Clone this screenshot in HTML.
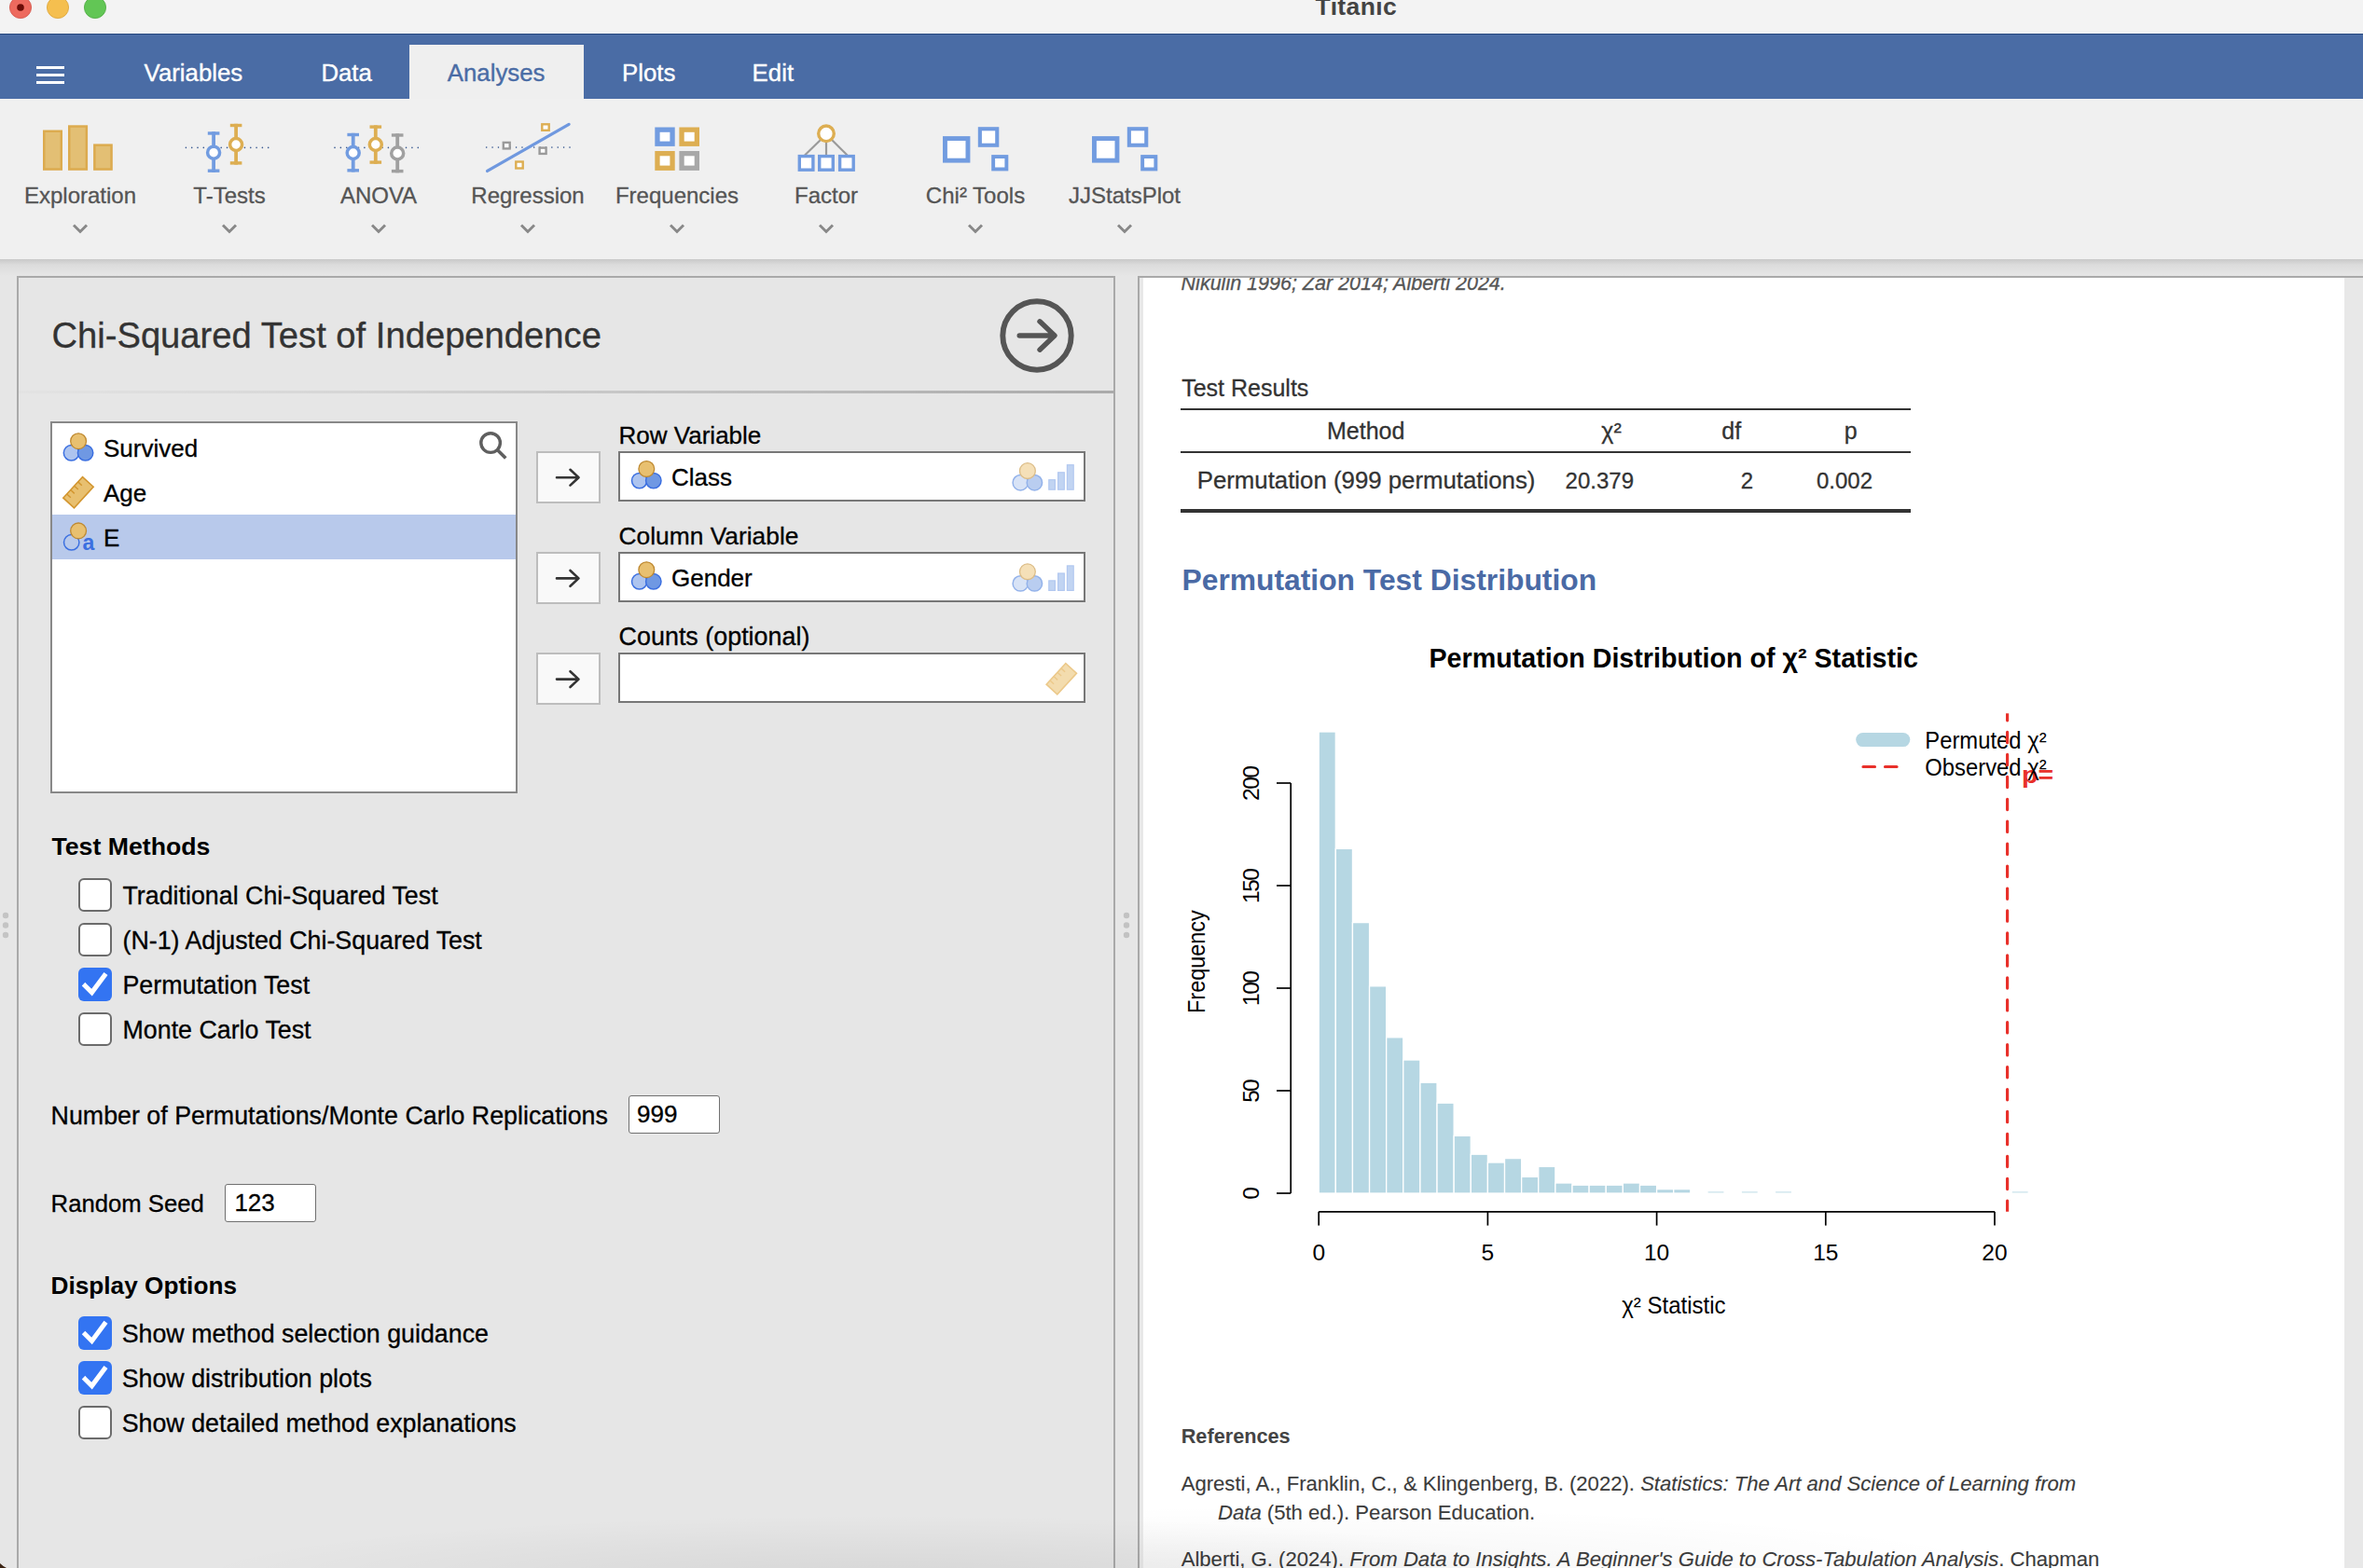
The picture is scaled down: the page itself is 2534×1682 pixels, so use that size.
<!DOCTYPE html>
<html><head><meta charset="utf-8"><title>Titanic</title>
<style>
html,body{margin:0;padding:0;width:2534px;height:1682px;overflow:hidden;background:#e6e6e6;font-family:"Liberation Sans", sans-serif;}
.t{position:absolute;white-space:nowrap;line-height:1;}
svg{overflow:visible}
</style></head><body>
<div style="position:absolute;left:0px;top:0px;width:2534px;height:36px;background:#f3f3f3"></div>
<div style="position:absolute;left:0px;top:35px;width:2534px;height:1px;background:#ffffff"></div>
<svg style="position:absolute;left:0px;top:0px;" width="130" height="36" viewBox="0 0 130 36"><circle cx="22" cy="8" r="11.6" fill="#ed6a5e" stroke="#d2574c" stroke-width="0.8"/><circle cx="22" cy="8" r="3.8" fill="#6a0c06"/><circle cx="62" cy="8" r="11.6" fill="#f5bf4f" stroke="#d9a33a" stroke-width="0.8"/><circle cx="102" cy="8" r="11.6" fill="#62c655" stroke="#4ea942" stroke-width="0.8"/></svg>
<div class="t" style="left:1410.6px;top:-5.8px;font-size:26.5px;color:#444;font-weight:bold;font-style:normal;letter-spacing:0.35px;">Titanic</div>
<svg style="position:absolute;left:0px;top:1660px;" width="30" height="22" viewBox="0 0 30 22"><path d="M0 17 Q3 20 7 22 L0 22 Z" fill="#3b2414"/></svg>
<div style="position:absolute;left:0px;top:36px;width:2534px;height:70px;background:#4a6ca5"></div>
<div style="position:absolute;left:0px;top:36px;width:2534px;height:1px;background:#25467c"></div>
<div style="position:absolute;left:39px;top:70.5px;width:30px;height:3.0px;background:#fff"></div>
<div style="position:absolute;left:39px;top:78.5px;width:30px;height:3.0px;background:#fff"></div>
<div style="position:absolute;left:39px;top:86.5px;width:30px;height:3.0px;background:#fff"></div>
<div style="position:absolute;left:439px;top:48px;width:187px;height:58px;background:#efefef"></div>
<div class="t" style="left:154.6px;top:66.2px;font-size:25.8px;color:#fff;font-weight:normal;font-style:normal;-webkit-text-stroke:0.35px #fff">Variables</div>
<div class="t" style="left:344.4px;top:66.2px;font-size:25.8px;color:#fff;font-weight:normal;font-style:normal;-webkit-text-stroke:0.35px #fff">Data</div>
<div class="t" style="left:479.8px;top:66.2px;font-size:25.8px;color:#4a6ca5;font-weight:normal;font-style:normal;-webkit-text-stroke:0.35px #4a6ca5">Analyses</div>
<div class="t" style="left:667.0px;top:66.2px;font-size:25.8px;color:#fff;font-weight:normal;font-style:normal;-webkit-text-stroke:0.35px #fff">Plots</div>
<div class="t" style="left:806.6px;top:66.2px;font-size:25.8px;color:#fff;font-weight:normal;font-style:normal;-webkit-text-stroke:0.35px #fff">Edit</div>
<div style="position:absolute;left:0px;top:106px;width:2534px;height:172px;background:#f0f0f0"></div>
<div style="position:absolute;left:0px;top:278px;width:2534px;height:18px;background:linear-gradient(#c9c9c9,#dcdcdc 35%,#e6e6e6)"></div>
<div class="t" style="left:86.0px;transform:translateX(-50%);top:198.1px;font-size:24px;color:#555;font-weight:normal;font-style:normal;-webkit-text-stroke-width:0.3px;">Exploration</div>
<svg style="position:absolute;left:78px;top:240px;" width="16" height="10" viewBox="0 0 16 10"><polyline points="1,1.5 8,8.5 15,1.5" fill="none" stroke="#888" stroke-width="2.9"/></svg>
<div class="t" style="left:246.0px;transform:translateX(-50%);top:198.1px;font-size:24px;color:#555;font-weight:normal;font-style:normal;-webkit-text-stroke-width:0.3px;">T-Tests</div>
<svg style="position:absolute;left:238px;top:240px;" width="16" height="10" viewBox="0 0 16 10"><polyline points="1,1.5 8,8.5 15,1.5" fill="none" stroke="#888" stroke-width="2.9"/></svg>
<div class="t" style="left:406.0px;transform:translateX(-50%);top:198.1px;font-size:24px;color:#555;font-weight:normal;font-style:normal;-webkit-text-stroke-width:0.3px;">ANOVA</div>
<svg style="position:absolute;left:398px;top:240px;" width="16" height="10" viewBox="0 0 16 10"><polyline points="1,1.5 8,8.5 15,1.5" fill="none" stroke="#888" stroke-width="2.9"/></svg>
<div class="t" style="left:566.0px;transform:translateX(-50%);top:198.1px;font-size:24px;color:#555;font-weight:normal;font-style:normal;-webkit-text-stroke-width:0.3px;">Regression</div>
<svg style="position:absolute;left:558px;top:240px;" width="16" height="10" viewBox="0 0 16 10"><polyline points="1,1.5 8,8.5 15,1.5" fill="none" stroke="#888" stroke-width="2.9"/></svg>
<div class="t" style="left:726.0px;transform:translateX(-50%);top:198.1px;font-size:24px;color:#555;font-weight:normal;font-style:normal;-webkit-text-stroke-width:0.3px;">Frequencies</div>
<svg style="position:absolute;left:718px;top:240px;" width="16" height="10" viewBox="0 0 16 10"><polyline points="1,1.5 8,8.5 15,1.5" fill="none" stroke="#888" stroke-width="2.9"/></svg>
<div class="t" style="left:886.0px;transform:translateX(-50%);top:198.1px;font-size:24px;color:#555;font-weight:normal;font-style:normal;-webkit-text-stroke-width:0.3px;">Factor</div>
<svg style="position:absolute;left:878px;top:240px;" width="16" height="10" viewBox="0 0 16 10"><polyline points="1,1.5 8,8.5 15,1.5" fill="none" stroke="#888" stroke-width="2.9"/></svg>
<div class="t" style="left:1046.0px;transform:translateX(-50%);top:198.1px;font-size:24px;color:#555;font-weight:normal;font-style:normal;-webkit-text-stroke-width:0.3px;">Chi² Tools</div>
<svg style="position:absolute;left:1038px;top:240px;" width="16" height="10" viewBox="0 0 16 10"><polyline points="1,1.5 8,8.5 15,1.5" fill="none" stroke="#888" stroke-width="2.9"/></svg>
<div class="t" style="left:1206.0px;transform:translateX(-50%);top:198.1px;font-size:24px;color:#555;font-weight:normal;font-style:normal;-webkit-text-stroke-width:0.3px;">JJStatsPlot</div>
<svg style="position:absolute;left:1198px;top:240px;" width="16" height="10" viewBox="0 0 16 10"><polyline points="1,1.5 8,8.5 15,1.5" fill="none" stroke="#888" stroke-width="2.9"/></svg>
<svg style="position:absolute;left:0px;top:0px;pointer-events:none" width="2534" height="300" viewBox="0 0 2534 300"><rect x="47.25" y="140.75" width="18.5" height="40.80000000000001" fill="#e3bf74" stroke="#dcab4f" stroke-width="2.5"/><rect x="74.25" y="135.55" width="18.599999999999994" height="46.0" fill="#e3bf74" stroke="#dcab4f" stroke-width="2.5"/><rect x="101.35" y="155.65" width="18.200000000000003" height="25.900000000000006" fill="#e3bf74" stroke="#dcab4f" stroke-width="2.5"/></svg>
<svg style="position:absolute;left:0px;top:0px;pointer-events:none" width="2534" height="300" viewBox="0 0 2534 300"><circle cx="199.40" cy="158.4" r="0.8" fill="#3a5a92"/><circle cx="205.71" cy="158.4" r="0.8" fill="#3a5a92"/><circle cx="212.01" cy="158.4" r="0.8" fill="#3a5a92"/><circle cx="218.32" cy="158.4" r="0.8" fill="#3a5a92"/><circle cx="224.63" cy="158.4" r="0.8" fill="#3a5a92"/><circle cx="230.94" cy="158.4" r="0.8" fill="#3a5a92"/><circle cx="237.24" cy="158.4" r="0.8" fill="#3a5a92"/><circle cx="243.55" cy="158.4" r="0.8" fill="#3a5a92"/><circle cx="249.86" cy="158.4" r="0.8" fill="#3a5a92"/><circle cx="256.16" cy="158.4" r="0.8" fill="#3a5a92"/><circle cx="262.47" cy="158.4" r="0.8" fill="#3a5a92"/><circle cx="268.78" cy="158.4" r="0.8" fill="#3a5a92"/><circle cx="275.09" cy="158.4" r="0.8" fill="#3a5a92"/><circle cx="281.39" cy="158.4" r="0.8" fill="#3a5a92"/><circle cx="287.70" cy="158.4" r="0.8" fill="#3a5a92"/><line x1="229.1" y1="141.3" x2="229.1" y2="184.9" stroke="#729ce0" stroke-width="3.8"/><rect x="222.79999999999998" y="141.3" width="12.6" height="3.4" fill="#729ce0"/><rect x="222.79999999999998" y="181.5" width="12.6" height="3.4" fill="#729ce0"/><circle cx="229.1" cy="163.7" r="6.5" fill="#fff" stroke="#729ce0" stroke-width="3.5"/><line x1="253.1" y1="132.8" x2="253.1" y2="176.6" stroke="#ddae52" stroke-width="3.8"/><rect x="246.79999999999998" y="132.8" width="12.6" height="3.4" fill="#ddae52"/><rect x="246.79999999999998" y="173.2" width="12.6" height="3.4" fill="#ddae52"/><circle cx="253.1" cy="155" r="6.5" fill="#fff" stroke="#ddae52" stroke-width="3.5"/><circle cx="359.00" cy="158.4" r="0.8" fill="#3a5a92"/><circle cx="365.38" cy="158.4" r="0.8" fill="#3a5a92"/><circle cx="371.76" cy="158.4" r="0.8" fill="#3a5a92"/><circle cx="378.14" cy="158.4" r="0.8" fill="#3a5a92"/><circle cx="384.51" cy="158.4" r="0.8" fill="#3a5a92"/><circle cx="390.89" cy="158.4" r="0.8" fill="#3a5a92"/><circle cx="397.27" cy="158.4" r="0.8" fill="#3a5a92"/><circle cx="403.65" cy="158.4" r="0.8" fill="#3a5a92"/><circle cx="410.03" cy="158.4" r="0.8" fill="#3a5a92"/><circle cx="416.41" cy="158.4" r="0.8" fill="#3a5a92"/><circle cx="422.79" cy="158.4" r="0.8" fill="#3a5a92"/><circle cx="429.16" cy="158.4" r="0.8" fill="#3a5a92"/><circle cx="435.54" cy="158.4" r="0.8" fill="#3a5a92"/><circle cx="441.92" cy="158.4" r="0.8" fill="#3a5a92"/><circle cx="448.30" cy="158.4" r="0.8" fill="#3a5a92"/><line x1="378.7" y1="142.8" x2="378.7" y2="184.5" stroke="#729ce0" stroke-width="3.8"/><rect x="372.4" y="142.8" width="12.6" height="3.4" fill="#729ce0"/><rect x="372.4" y="181.1" width="12.6" height="3.4" fill="#729ce0"/><circle cx="378.7" cy="164" r="6.5" fill="#fff" stroke="#729ce0" stroke-width="3.5"/><line x1="402.8" y1="134.4" x2="402.8" y2="175.8" stroke="#ddae52" stroke-width="3.8"/><rect x="396.5" y="134.4" width="12.6" height="3.4" fill="#ddae52"/><rect x="396.5" y="172.4" width="12.6" height="3.4" fill="#ddae52"/><circle cx="402.8" cy="155" r="6.5" fill="#fff" stroke="#ddae52" stroke-width="3.5"/><line x1="426.2" y1="143.3" x2="426.2" y2="185.3" stroke="#a0a0a0" stroke-width="3.8"/><rect x="419.9" y="143.3" width="12.6" height="3.4" fill="#a0a0a0"/><rect x="419.9" y="181.9" width="12.6" height="3.4" fill="#a0a0a0"/><circle cx="426.2" cy="164.5" r="6.5" fill="#fff" stroke="#a0a0a0" stroke-width="3.5"/><circle cx="521.70" cy="158.1" r="0.8" fill="#3a5a92"/><circle cx="528.08" cy="158.1" r="0.8" fill="#3a5a92"/><circle cx="534.46" cy="158.1" r="0.8" fill="#3a5a92"/><circle cx="540.84" cy="158.1" r="0.8" fill="#3a5a92"/><circle cx="547.21" cy="158.1" r="0.8" fill="#3a5a92"/><circle cx="553.59" cy="158.1" r="0.8" fill="#3a5a92"/><circle cx="559.97" cy="158.1" r="0.8" fill="#3a5a92"/><circle cx="566.35" cy="158.1" r="0.8" fill="#3a5a92"/><circle cx="572.73" cy="158.1" r="0.8" fill="#3a5a92"/><circle cx="579.11" cy="158.1" r="0.8" fill="#3a5a92"/><circle cx="585.49" cy="158.1" r="0.8" fill="#3a5a92"/><circle cx="591.86" cy="158.1" r="0.8" fill="#3a5a92"/><circle cx="598.24" cy="158.1" r="0.8" fill="#3a5a92"/><circle cx="604.62" cy="158.1" r="0.8" fill="#3a5a92"/><circle cx="611.00" cy="158.1" r="0.8" fill="#3a5a92"/><rect x="539.80" y="152.90" width="6.90" height="6.50" fill="#fff" stroke="#9a9a9a" stroke-width="2.4"/><rect x="578.60" y="158.60" width="7.00" height="6.30" fill="#fff" stroke="#9a9a9a" stroke-width="2.4"/><line x1="522.6" y1="183.4" x2="610.1" y2="133.4" stroke="#6f98df" stroke-width="3.3" stroke-linecap="round"/><rect x="581.30" y="133.30" width="7.40" height="6.50" fill="#fff" stroke="#ddae52" stroke-width="2.4"/><rect x="553.30" y="173.50" width="7.40" height="7.00" fill="#fff" stroke="#ddae52" stroke-width="2.4"/><rect x="704.95" y="139.15" width="16.10" height="15.10" fill="#fff" stroke="#729ce0" stroke-width="5.3"/><rect x="731.05" y="139.15" width="16.30" height="15.10" fill="#fff" stroke="#ddae52" stroke-width="5.3"/><rect x="704.95" y="164.65" width="16.10" height="15.60" fill="#fff" stroke="#ddae52" stroke-width="5.3"/><rect x="731.05" y="164.65" width="16.30" height="15.60" fill="#fff" stroke="#a8a8a8" stroke-width="5.3"/><g stroke="#9a9a9a" stroke-width="2.2"><line x1="880" y1="150" x2="863" y2="166.5"/><line x1="886" y1="152" x2="886" y2="166.5"/><line x1="892" y1="150" x2="908.6" y2="166.5"/></g><circle cx="886" cy="143.3" r="8.3" fill="#fff" stroke="#ddae52" stroke-width="3.4"/><rect x="857.30" y="167.60" width="14.60" height="14.60" fill="#fff" stroke="#729ce0" stroke-width="3.4"/><rect x="878.70" y="167.60" width="14.60" height="14.60" fill="#fff" stroke="#729ce0" stroke-width="3.4"/><rect x="900.60" y="167.60" width="14.60" height="14.60" fill="#fff" stroke="#729ce0" stroke-width="3.4"/><rect x="1013.45" y="148.55" width="24.50" height="23.60" fill="#fff" stroke="#729ce0" stroke-width="4.9"/><rect x="1050.85" y="138.25" width="18.40" height="17.50" fill="#fff" stroke="#729ce0" stroke-width="4.1"/><rect x="1065.15" y="168.05" width="14.20" height="13.40" fill="#fff" stroke="#729ce0" stroke-width="3.9"/><rect x="1173.45" y="148.55" width="24.50" height="23.60" fill="#fff" stroke="#729ce0" stroke-width="4.9"/><rect x="1210.85" y="138.25" width="18.40" height="17.50" fill="#fff" stroke="#729ce0" stroke-width="4.1"/><rect x="1225.15" y="168.05" width="14.20" height="13.40" fill="#fff" stroke="#729ce0" stroke-width="3.9"/></svg>
<div style="position:absolute;left:18px;top:296px;width:1178px;height:1404px;background:#e6e6e6;border:2px solid #a9a9a9;box-sizing:border-box"></div>
<div style="position:absolute;left:1220px;top:296px;width:1314px;height:1404px;background:#e8e8e8;border-top:2px solid #a9a9a9;border-left:2px solid #a9a9a9;box-sizing:border-box"></div>
<div style="position:absolute;left:1226px;top:298px;width:1288px;height:1402px;background:#fff"></div>
<div class="t" style="left:55.4px;top:341.0px;font-size:38.2px;color:#333;font-weight:normal;font-style:normal;-webkit-text-stroke-width:0.3px;">Chi-Squared Test of Independence</div>
<svg style="position:absolute;left:0px;top:0px;pointer-events:none" width="2534" height="1682" viewBox="0 0 2534 1682"><circle cx="1112" cy="360" r="36.7" fill="none" stroke="#555" stroke-width="5.9"/><path d="M1093.2 360 H1130.5 M1115 344.8 L1131 360 L1115 375.2" fill="none" stroke="#555" stroke-width="5.4" stroke-linecap="round" stroke-linejoin="round"/></svg>
<div style="position:absolute;left:20px;top:419px;width:1174px;height:3px;background:linear-gradient(90deg,#e3e3e3,#d6d6d6 30%,#aaaaaa)"></div>
<div style="position:absolute;left:54px;top:452px;width:501px;height:399px;background:#fff;border:2px solid #888;box-sizing:border-box"></div>
<div style="position:absolute;left:56px;top:552px;width:497px;height:48px;background:#b8c9eb"></div>
<svg style="position:absolute;left:0px;top:0px;pointer-events:none" width="2534" height="1682" viewBox="0 0 2534 1682"><circle cx="76.5" cy="485.8" r="8.2" fill="#adc4ef" stroke="#3b6fe0" stroke-width="1.5"/><circle cx="91.6" cy="485.8" r="8.2" fill="#6f98e3" stroke="#3b6fe0" stroke-width="1.5"/><circle cx="84.1" cy="473.2" r="8.4" fill="#e8c070" stroke="#bf8a32" stroke-width="1.3"/><g transform="translate(84,528.2) rotate(-47.5)"><rect x="-15.3" y="-7.9" width="30.6" height="15.8" fill="#e8c070" stroke="#d3962f" stroke-width="1.6"/><line x1="-9.6" y1="-7.9" x2="-9.6" y2="-2.3" stroke="#d3962f" stroke-width="1.4"/><line x1="-3.6999999999999993" y1="-7.9" x2="-3.6999999999999993" y2="-2.3" stroke="#d3962f" stroke-width="1.4"/><line x1="2.200000000000001" y1="-7.9" x2="2.200000000000001" y2="-2.3" stroke="#d3962f" stroke-width="1.4"/><line x1="8.100000000000003" y1="-7.9" x2="8.100000000000003" y2="-2.3" stroke="#d3962f" stroke-width="1.4"/></g><circle cx="76.69999999999999" cy="581.8" r="8.2" fill="none" stroke="#3b6fe0" stroke-width="1.5"/><text x="88.5" y="590.4" font-family="Liberation Sans" font-weight="bold" font-size="23" fill="#3b6fe0">a</text><circle cx="84.1" cy="569.4" r="8.4" fill="#e8c070" stroke="#bf8a32" stroke-width="1.3"/><circle cx="526.1" cy="475.1" r="10.3" fill="none" stroke="#5f5f5f" stroke-width="3.4"/><line x1="533.5" y1="482.8" x2="542.3" y2="491.6" stroke="#5f5f5f" stroke-width="3.6"/></svg>
<div class="t" style="left:111.0px;top:467.7px;font-size:26px;color:#000;font-weight:normal;font-style:normal;-webkit-text-stroke-width:0.3px;">Survived</div>
<div class="t" style="left:111.0px;top:516.0px;font-size:26px;color:#000;font-weight:normal;font-style:normal;-webkit-text-stroke-width:0.3px;">Age</div>
<div class="t" style="left:111.0px;top:564.2px;font-size:26px;color:#000;font-weight:normal;font-style:normal;-webkit-text-stroke-width:0.3px;">E</div>
<div style="position:absolute;left:575px;top:484.0px;width:69px;height:56.0px;background:#f9f9f9;border:2px solid #bdbdbd;box-sizing:border-box"></div>
<svg style="position:absolute;left:0px;top:0px;pointer-events:none" width="2534" height="1682" viewBox="0 0 2534 1682"><path d="M597 512.2 H620 M611.5 503.8 L620.5 512.2 L611.5 520.6" fill="none" stroke="#333" stroke-width="2.6" stroke-linecap="round" stroke-linejoin="round"/></svg>
<div class="t" style="left:663.6px;top:454.4px;font-size:26px;color:#000;font-weight:normal;font-style:normal;-webkit-text-stroke-width:0.3px;">Row Variable</div>
<div style="position:absolute;left:663px;top:484.0px;width:501px;height:54.0px;background:#fff;border:2px solid #777;box-sizing:border-box"></div>
<svg style="position:absolute;left:0px;top:0px;pointer-events:none" width="2534" height="1682" viewBox="0 0 2534 1682"><circle cx="685.6999999999999" cy="515.6" r="8.2" fill="#adc4ef" stroke="#3b6fe0" stroke-width="1.5"/><circle cx="700.8" cy="515.6" r="8.2" fill="#6f98e3" stroke="#3b6fe0" stroke-width="1.5"/><circle cx="693.3" cy="503.0" r="8.4" fill="#e8c070" stroke="#bf8a32" stroke-width="1.3"/><circle cx="1094.3000000000002" cy="517.7" r="8.2" fill="#d8e3f6" stroke="#93b2ea" stroke-width="1.5"/><circle cx="1109.4" cy="517.7" r="8.2" fill="#b9cdf0" stroke="#93b2ea" stroke-width="1.5"/><circle cx="1101.9" cy="505.1" r="8.4" fill="#f5e0b8" stroke="#dcbd88" stroke-width="1.3"/><rect x="1124.8" y="514.7" width="6.599999999999954" height="10.499999999999932" fill="#c1d4f2" stroke="#b2c8f0" stroke-width="1.2"/><rect x="1134.6" y="506.8" width="6.700000000000091" height="18.399999999999967" fill="#c1d4f2" stroke="#b2c8f0" stroke-width="1.2"/><rect x="1144.3999999999999" y="498.70000000000005" width="6.8" height="26.499999999999932" fill="#c1d4f2" stroke="#b2c8f0" stroke-width="1.2"/></svg>
<div class="t" style="left:720.0px;top:498.5px;font-size:26px;color:#000;font-weight:normal;font-style:normal;-webkit-text-stroke-width:0.3px;">Class</div>
<div style="position:absolute;left:575px;top:592.2px;width:69px;height:56.0px;background:#f9f9f9;border:2px solid #bdbdbd;box-sizing:border-box"></div>
<svg style="position:absolute;left:0px;top:0px;pointer-events:none" width="2534" height="1682" viewBox="0 0 2534 1682"><path d="M597 620.4000000000001 H620 M611.5 612.0 L620.5 620.4000000000001 L611.5 628.8000000000001" fill="none" stroke="#333" stroke-width="2.6" stroke-linecap="round" stroke-linejoin="round"/></svg>
<div class="t" style="left:663.6px;top:562.3px;font-size:26.35px;color:#000;font-weight:normal;font-style:normal;-webkit-text-stroke-width:0.3px;">Column Variable</div>
<div style="position:absolute;left:663px;top:592.2px;width:501px;height:54.0px;background:#fff;border:2px solid #777;box-sizing:border-box"></div>
<svg style="position:absolute;left:0px;top:0px;pointer-events:none" width="2534" height="1682" viewBox="0 0 2534 1682"><circle cx="685.6999999999999" cy="623.8000000000001" r="8.2" fill="#adc4ef" stroke="#3b6fe0" stroke-width="1.5"/><circle cx="700.8" cy="623.8000000000001" r="8.2" fill="#6f98e3" stroke="#3b6fe0" stroke-width="1.5"/><circle cx="693.3" cy="611.2" r="8.4" fill="#e8c070" stroke="#bf8a32" stroke-width="1.3"/><circle cx="1094.3000000000002" cy="625.9000000000001" r="8.2" fill="#d8e3f6" stroke="#93b2ea" stroke-width="1.5"/><circle cx="1109.4" cy="625.9000000000001" r="8.2" fill="#b9cdf0" stroke="#93b2ea" stroke-width="1.5"/><circle cx="1101.9" cy="613.3000000000001" r="8.4" fill="#f5e0b8" stroke="#dcbd88" stroke-width="1.3"/><rect x="1124.8" y="622.9000000000001" width="6.599999999999954" height="10.499999999999932" fill="#c1d4f2" stroke="#b2c8f0" stroke-width="1.2"/><rect x="1134.6" y="615.0" width="6.700000000000091" height="18.399999999999967" fill="#c1d4f2" stroke="#b2c8f0" stroke-width="1.2"/><rect x="1144.3999999999999" y="606.9000000000001" width="6.8" height="26.499999999999932" fill="#c1d4f2" stroke="#b2c8f0" stroke-width="1.2"/></svg>
<div class="t" style="left:720.0px;top:606.7px;font-size:26px;color:#000;font-weight:normal;font-style:normal;-webkit-text-stroke-width:0.3px;">Gender</div>
<div style="position:absolute;left:575px;top:700.4px;width:69px;height:56.0px;background:#f9f9f9;border:2px solid #bdbdbd;box-sizing:border-box"></div>
<svg style="position:absolute;left:0px;top:0px;pointer-events:none" width="2534" height="1682" viewBox="0 0 2534 1682"><path d="M597 728.6 H620 M611.5 720.2 L620.5 728.6 L611.5 737.0" fill="none" stroke="#333" stroke-width="2.6" stroke-linecap="round" stroke-linejoin="round"/></svg>
<div class="t" style="left:663.6px;top:670.0px;font-size:26.9px;color:#000;font-weight:normal;font-style:normal;-webkit-text-stroke-width:0.3px;">Counts (optional)</div>
<div style="position:absolute;left:663px;top:700.4px;width:501px;height:54.0px;background:#fff;border:2px solid #777;box-sizing:border-box"></div>
<svg style="position:absolute;left:0px;top:0px;pointer-events:none" width="2534" height="1682" viewBox="0 0 2534 1682"><g transform="translate(1138.3,728.2) rotate(-47.5)"><rect x="-15.3" y="-7.9" width="30.6" height="15.8" fill="#f3dcae" stroke="#ecc98a" stroke-width="1.6"/><line x1="-9.6" y1="-7.9" x2="-9.6" y2="-2.3" stroke="#ecc98a" stroke-width="1.4"/><line x1="-3.6999999999999993" y1="-7.9" x2="-3.6999999999999993" y2="-2.3" stroke="#ecc98a" stroke-width="1.4"/><line x1="2.200000000000001" y1="-7.9" x2="2.200000000000001" y2="-2.3" stroke="#ecc98a" stroke-width="1.4"/><line x1="8.100000000000003" y1="-7.9" x2="8.100000000000003" y2="-2.3" stroke="#ecc98a" stroke-width="1.4"/></g></svg>
<div class="t" style="left:55.4px;top:895.4px;font-size:26.7px;color:#000;font-weight:bold;font-style:normal;">Test Methods</div>
<div style="position:absolute;left:84px;top:942.0px;width:36px;height:36.0px;background:#fff;border:2px solid #6b6b6b;border-radius:6px;box-sizing:border-box"></div>
<div class="t" style="left:131.5px;top:947.6px;font-size:26.8px;color:#000;font-weight:normal;font-style:normal;-webkit-text-stroke-width:0.3px;">Traditional Chi-Squared Test</div>
<div style="position:absolute;left:84px;top:990.1px;width:36px;height:35.999999999999886px;background:#fff;border:2px solid #6b6b6b;border-radius:6px;box-sizing:border-box"></div>
<div class="t" style="left:131.5px;top:995.8px;font-size:26.8px;color:#000;font-weight:normal;font-style:normal;-webkit-text-stroke-width:0.3px;">(N-1) Adjusted Chi-Squared Test</div>
<div style="position:absolute;left:84px;top:1038.2px;width:36px;height:36.0px;background:#3374f2;border-radius:6px"></div>
<svg style="position:absolute;left:0px;top:0px;pointer-events:none" width="2534" height="1682" viewBox="0 0 2534 1682"><path d="M91.3 1057.4 L98.5 1064.6000000000001 L112 1046.4" fill="none" stroke="#fff" stroke-width="5" stroke-linecap="square" stroke-linejoin="miter"/></svg>
<div class="t" style="left:131.5px;top:1044.0px;font-size:26.8px;color:#000;font-weight:normal;font-style:normal;-webkit-text-stroke-width:0.3px;">Permutation Test</div>
<div style="position:absolute;left:84px;top:1086.3px;width:36px;height:36.0px;background:#fff;border:2px solid #6b6b6b;border-radius:6px;box-sizing:border-box"></div>
<div class="t" style="left:131.5px;top:1092.2px;font-size:26.8px;color:#000;font-weight:normal;font-style:normal;-webkit-text-stroke-width:0.3px;">Monte Carlo Test</div>
<div class="t" style="left:54.6px;top:1183.7px;font-size:26.8px;color:#000;font-weight:normal;font-style:normal;-webkit-text-stroke-width:0.3px;">Number of Permutations/Monte Carlo Replications</div>
<div style="position:absolute;left:673.5px;top:1174.6px;width:98.5px;height:41.40000000000009px;background:#fff;border:1.5px solid #707070;border-radius:3px;box-sizing:border-box"></div>
<div class="t" style="left:683.0px;top:1182.0px;font-size:26px;color:#000;font-weight:normal;font-style:normal;-webkit-text-stroke-width:0.3px;">999</div>
<div class="t" style="left:54.6px;top:1279.0px;font-size:25.7px;color:#000;font-weight:normal;font-style:normal;-webkit-text-stroke-width:0.3px;">Random Seed</div>
<div style="position:absolute;left:241px;top:1269.6px;width:98px;height:41.40000000000009px;background:#fff;border:1.5px solid #707070;border-radius:3px;box-sizing:border-box"></div>
<div class="t" style="left:251.4px;top:1277.0px;font-size:26px;color:#000;font-weight:normal;font-style:normal;-webkit-text-stroke-width:0.3px;">123</div>
<div class="t" style="left:54.6px;top:1365.8px;font-size:26.2px;color:#000;font-weight:bold;font-style:normal;">Display Options</div>
<div style="position:absolute;left:84px;top:1412.0px;width:36px;height:36.0px;background:#3374f2;border-radius:6px"></div>
<svg style="position:absolute;left:0px;top:0px;pointer-events:none" width="2534" height="1682" viewBox="0 0 2534 1682"><path d="M91.3 1431.2 L98.5 1438.4 L112 1420.2" fill="none" stroke="#fff" stroke-width="5" stroke-linecap="square" stroke-linejoin="miter"/></svg>
<div class="t" style="left:130.7px;top:1417.7px;font-size:26.8px;color:#000;font-weight:normal;font-style:normal;-webkit-text-stroke-width:0.3px;">Show method selection guidance</div>
<div style="position:absolute;left:84px;top:1460.2px;width:36px;height:36.0px;background:#3374f2;border-radius:6px"></div>
<svg style="position:absolute;left:0px;top:0px;pointer-events:none" width="2534" height="1682" viewBox="0 0 2534 1682"><path d="M91.3 1479.4 L98.5 1486.6000000000001 L112 1468.4" fill="none" stroke="#fff" stroke-width="5" stroke-linecap="square" stroke-linejoin="miter"/></svg>
<div class="t" style="left:130.7px;top:1465.9px;font-size:26.8px;color:#000;font-weight:normal;font-style:normal;-webkit-text-stroke-width:0.3px;">Show distribution plots</div>
<div style="position:absolute;left:84px;top:1508.4px;width:36px;height:36.0px;background:#fff;border:2px solid #6b6b6b;border-radius:6px;box-sizing:border-box"></div>
<div class="t" style="left:130.7px;top:1514.1px;font-size:26.8px;color:#000;font-weight:normal;font-style:normal;-webkit-text-stroke-width:0.3px;">Show detailed method explanations</div>
<svg style="position:absolute;left:0px;top:0px;pointer-events:none" width="2534" height="1682" viewBox="0 0 2534 1682"><circle cx="6" cy="982" r="3.2" fill="#c4c4c4"/><circle cx="1208" cy="982" r="3.2" fill="#c2c2c2"/><circle cx="6" cy="992.5" r="3.2" fill="#c4c4c4"/><circle cx="1208" cy="992.5" r="3.2" fill="#c2c2c2"/><circle cx="6" cy="1003" r="3.2" fill="#c4c4c4"/><circle cx="1208" cy="1003" r="3.2" fill="#c2c2c2"/></svg>
<div style="position:absolute;left:1226px;top:298px;width:1288px;height:1384px;overflow:hidden"><div style="position:absolute;left:-1226px;top:-298px;width:2534px;height:1682px">
<div class="t" style="left:1266.6px;top:293.8px;font-size:21.5px;color:#555;font-weight:normal;font-style:italic;-webkit-text-stroke-width:0.3px;">Nikulin 1996; Zar 2014; Alberti 2024.</div>
<div class="t" style="left:1267.2px;top:403.8px;font-size:25px;color:#333;font-weight:normal;font-style:normal;-webkit-text-stroke-width:0.3px;">Test Results</div>
<div style="position:absolute;left:1266px;top:438px;width:783px;height:2px;background:#333"></div>
<div style="position:absolute;left:1266px;top:484px;width:783px;height:2px;background:#333"></div>
<div style="position:absolute;left:1266px;top:546px;width:783px;height:4px;background:#333"></div>
<div class="t" style="left:1464.7px;transform:translateX(-50%);top:449.6px;font-size:25px;color:#333;font-weight:normal;font-style:normal;-webkit-text-stroke-width:0.3px;">Method</div>
<div class="t" style="left:1728.0px;transform:translateX(-50%);top:449.6px;font-size:25px;color:#333;font-weight:normal;font-style:normal;-webkit-text-stroke-width:0.3px;">χ²</div>
<div class="t" style="left:1856.8px;transform:translateX(-50%);top:449.6px;font-size:25px;color:#333;font-weight:normal;font-style:normal;-webkit-text-stroke-width:0.3px;">df</div>
<div class="t" style="left:1984.8px;transform:translateX(-50%);top:449.6px;font-size:25px;color:#333;font-weight:normal;font-style:normal;-webkit-text-stroke-width:0.3px;">p</div>
<div class="t" style="left:1283.7px;top:502.7px;font-size:25.8px;color:#333;font-weight:normal;font-style:normal;-webkit-text-stroke-width:0.3px;">Permutation (999 permutations)</div>
<div class="t" style="right:782.0px;top:504.0px;font-size:24px;color:#333;font-weight:normal;font-style:normal;-webkit-text-stroke-width:0.3px;">20.379</div>
<div class="t" style="right:654.0px;top:504.0px;font-size:24px;color:#333;font-weight:normal;font-style:normal;-webkit-text-stroke-width:0.3px;">2</div>
<div class="t" style="right:526.0px;top:504.0px;font-size:24px;color:#333;font-weight:normal;font-style:normal;-webkit-text-stroke-width:0.3px;">0.002</div>
<div class="t" style="left:1267.5px;top:607.0px;font-size:31.8px;color:#4a6aa5;font-weight:bold;font-style:normal;">Permutation Test Distribution</div>
<svg style="position:absolute;left:0px;top:0px;pointer-events:none;font-family:Liberation Sans,sans-serif" width="2534" height="1682" viewBox="0 0 2534 1682"><rect x="1414.20" y="785.00" width="18.12" height="495.00" fill="#b6d7e3" stroke="#fff" stroke-width="1.3"/><rect x="1432.32" y="910.40" width="18.12" height="369.60" fill="#b6d7e3" stroke="#fff" stroke-width="1.3"/><rect x="1450.44" y="989.60" width="18.12" height="290.40" fill="#b6d7e3" stroke="#fff" stroke-width="1.3"/><rect x="1468.56" y="1057.80" width="18.12" height="222.20" fill="#b6d7e3" stroke="#fff" stroke-width="1.3"/><rect x="1486.68" y="1112.80" width="18.12" height="167.20" fill="#b6d7e3" stroke="#fff" stroke-width="1.3"/><rect x="1504.80" y="1137.00" width="18.12" height="143.00" fill="#b6d7e3" stroke="#fff" stroke-width="1.3"/><rect x="1522.92" y="1161.20" width="18.12" height="118.80" fill="#b6d7e3" stroke="#fff" stroke-width="1.3"/><rect x="1541.04" y="1183.20" width="18.12" height="96.80" fill="#b6d7e3" stroke="#fff" stroke-width="1.3"/><rect x="1559.16" y="1218.40" width="18.12" height="61.60" fill="#b6d7e3" stroke="#fff" stroke-width="1.3"/><rect x="1577.28" y="1238.20" width="18.12" height="41.80" fill="#b6d7e3" stroke="#fff" stroke-width="1.3"/><rect x="1595.40" y="1247.00" width="18.12" height="33.00" fill="#b6d7e3" stroke="#fff" stroke-width="1.3"/><rect x="1613.52" y="1242.60" width="18.12" height="37.40" fill="#b6d7e3" stroke="#fff" stroke-width="1.3"/><rect x="1631.64" y="1262.40" width="18.12" height="17.60" fill="#b6d7e3" stroke="#fff" stroke-width="1.3"/><rect x="1649.76" y="1251.40" width="18.12" height="28.60" fill="#b6d7e3" stroke="#fff" stroke-width="1.3"/><rect x="1667.88" y="1269.00" width="18.12" height="11.00" fill="#b6d7e3" stroke="#fff" stroke-width="1.3"/><rect x="1686.00" y="1271.20" width="18.12" height="8.80" fill="#b6d7e3" stroke="#fff" stroke-width="1.3"/><rect x="1704.12" y="1271.20" width="18.12" height="8.80" fill="#b6d7e3" stroke="#fff" stroke-width="1.3"/><rect x="1722.24" y="1271.20" width="18.12" height="8.80" fill="#b6d7e3" stroke="#fff" stroke-width="1.3"/><rect x="1740.36" y="1269.00" width="18.12" height="11.00" fill="#b6d7e3" stroke="#fff" stroke-width="1.3"/><rect x="1758.48" y="1271.20" width="18.12" height="8.80" fill="#b6d7e3" stroke="#fff" stroke-width="1.3"/><rect x="1776.60" y="1275.60" width="18.12" height="4.40" fill="#b6d7e3" stroke="#fff" stroke-width="1.3"/><rect x="1794.72" y="1275.60" width="18.12" height="4.40" fill="#b6d7e3" stroke="#fff" stroke-width="1.3"/><rect x="1830.96" y="1277.80" width="18.12" height="2.20" fill="#b6d7e3" stroke="#fff" stroke-width="1.3"/><rect x="1867.20" y="1277.80" width="18.12" height="2.20" fill="#b6d7e3" stroke="#fff" stroke-width="1.3"/><rect x="1903.44" y="1277.80" width="18.12" height="2.20" fill="#b6d7e3" stroke="#fff" stroke-width="1.3"/><rect x="2157.12" y="1277.80" width="18.12" height="2.20" fill="#b6d7e3" stroke="#fff" stroke-width="1.3"/><line x1="1384.2" y1="840.0" x2="1384.2" y2="1280.0" stroke="#000" stroke-width="1.7"/><line x1="1369" y1="1280.0" x2="1384.2" y2="1280.0" stroke="#000" stroke-width="1.7"/><text transform="translate(1350.4 1280.0) rotate(-90)" text-anchor="middle" font-size="24.5" textLength="11.6" fill="#000">0</text><line x1="1369" y1="1170.0" x2="1384.2" y2="1170.0" stroke="#000" stroke-width="1.7"/><text transform="translate(1350.4 1170.0) rotate(-90)" text-anchor="middle" font-size="24.5" textLength="25.5" fill="#000">50</text><line x1="1369" y1="1060.0" x2="1384.2" y2="1060.0" stroke="#000" stroke-width="1.7"/><text transform="translate(1350.4 1060.0) rotate(-90)" text-anchor="middle" font-size="24.5" textLength="38.0" fill="#000">100</text><line x1="1369" y1="950.0" x2="1384.2" y2="950.0" stroke="#000" stroke-width="1.7"/><text transform="translate(1350.4 950.0) rotate(-90)" text-anchor="middle" font-size="24.5" textLength="38.0" fill="#000">150</text><line x1="1369" y1="840.0" x2="1384.2" y2="840.0" stroke="#000" stroke-width="1.7"/><text transform="translate(1350.4 840.0) rotate(-90)" text-anchor="middle" font-size="24.5" textLength="38.0" fill="#000">200</text><text transform="translate(1292.2 1031.6) rotate(-90)" text-anchor="middle" font-size="25" textLength="110.8" lengthAdjust="spacingAndGlyphs" fill="#000">Frequency</text><line x1="1414.2" y1="1299.8" x2="2139" y2="1299.8" stroke="#000" stroke-width="1.7"/><line x1="1414.2" y1="1299.8" x2="1414.2" y2="1314.6" stroke="#000" stroke-width="1.7"/><text x="1414.2" y="1351.5" text-anchor="middle" font-size="24.5" fill="#000">0</text><line x1="1595.4" y1="1299.8" x2="1595.4" y2="1314.6" stroke="#000" stroke-width="1.7"/><text x="1595.4" y="1351.5" text-anchor="middle" font-size="24.5" fill="#000">5</text><line x1="1776.6" y1="1299.8" x2="1776.6" y2="1314.6" stroke="#000" stroke-width="1.7"/><text x="1776.6" y="1351.5" text-anchor="middle" font-size="24.5" fill="#000">10</text><line x1="1957.8" y1="1299.8" x2="1957.8" y2="1314.6" stroke="#000" stroke-width="1.7"/><text x="1957.8" y="1351.5" text-anchor="middle" font-size="24.5" fill="#000">15</text><line x1="2139.0" y1="1299.8" x2="2139.0" y2="1314.6" stroke="#000" stroke-width="1.7"/><text x="2139.0" y="1351.5" text-anchor="middle" font-size="24.5" fill="#000">20</text><text x="1739.2" y="1409.2" font-size="25" textLength="111.4" lengthAdjust="spacingAndGlyphs" fill="#000">χ² Statistic</text><text x="1532.5" y="716.2" font-size="28.7" font-weight="bold" textLength="524.5" lengthAdjust="spacingAndGlyphs" fill="#000">Permutation Distribution of χ² Statistic</text><text x="2168" y="840" font-size="25" font-weight="bold" textLength="34" lengthAdjust="spacingAndGlyphs" fill="#e8302a">p=</text><line x1="1997.7" y1="793.6" x2="2040.8" y2="793.6" stroke="#b6d7e3" stroke-width="15" stroke-linecap="round"/><line x1="1998" y1="822.5" x2="2034" y2="822.5" stroke="#e8302a" stroke-width="3.2" stroke-dasharray="12.5 11" stroke-linecap="round"/><text x="2064.3" y="803" font-size="25" textLength="130.3" lengthAdjust="spacingAndGlyphs" fill="#000">Permuted χ²</text><text x="2064.3" y="831.8" font-size="25" textLength="130.3" lengthAdjust="spacingAndGlyphs" fill="#000">Observed χ²</text><line x1="2152.6" y1="761.5" x2="2152.6" y2="1320" stroke="#e8302a" stroke-width="3.2" stroke-dasharray="11.3 12.64" stroke-linecap="round" clip-path="url(#plotclip)"/><defs><clipPath id="plotclip"><rect x="1300" y="765.2" width="1000" height="534.6"/></clipPath></defs></svg>
<div class="t" style="left:1266.7px;top:1529.6px;font-size:21.7px;color:#444;font-weight:bold;font-style:normal;">References</div>
<div class="t" style="left:1266.7px;top:1580.5px;font-size:22.1px;color:#3c3c3c;font-weight:normal;font-style:normal;-webkit-text-stroke-width:0.12px;">Agresti, A., Franklin, C., &amp; Klingenberg, B. (2022). <i>Statistics: The Art and Science of Learning from</i></div>
<div class="t" style="left:1306.0px;top:1611.6px;font-size:22.1px;color:#3c3c3c;font-weight:normal;font-style:normal;-webkit-text-stroke-width:0.12px;"><i>Data</i> (5th ed.). Pearson Education.</div>
<div class="t" style="left:1266.7px;top:1662.0px;font-size:22.1px;color:#3c3c3c;font-weight:normal;font-style:normal;-webkit-text-stroke-width:0.12px;">Alberti, G. (2024). <i>From Data to Insights. A Beginner's Guide to Cross-Tabulation Analysis</i>. Chapman</div>
</div></div>
<div style="position:absolute;left:0px;top:1560px;width:2534px;height:122px;background:radial-gradient(ellipse 750px 70px at 950px 135px, rgba(0,0,0,0.07), rgba(0,0,0,0) 100%);pointer-events:none"></div>
<div style="position:absolute;left:1226px;top:1580px;width:1288px;height:102px;background:radial-gradient(ellipse 800px 75px at 150px 110px, rgba(0,0,0,0.045), rgba(0,0,0,0) 100%);pointer-events:none"></div>
</body></html>
